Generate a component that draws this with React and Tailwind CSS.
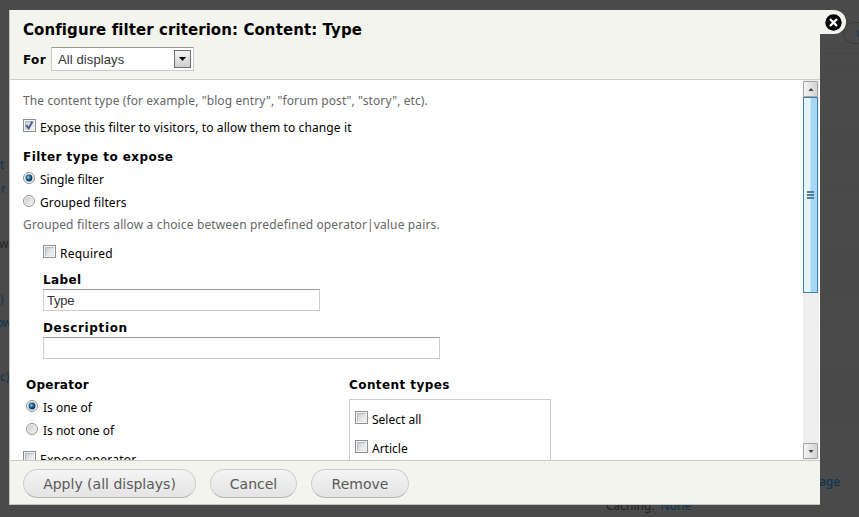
import React from "react";

const NOTO = "font-['Noto_Sans','Open_Sans',sans-serif]";

function Checkbox({ checked }) {
  return (
    <span className="flex h-[13px] w-[13px] shrink-0 border border-[#8e8f8f] bg-[#f4f4f4] p-[1px]">
      <span className="flex h-[9px] w-[9px] border border-[#b4b9c0] border-r-[#e3e5e8] border-b-[#e3e5e8] bg-gradient-to-br from-[#cbcfd5] to-[#f6f6f6]">
        {checked && (
          <svg viewBox="0 0 9 9" className="-mt-px -ml-px h-[9px] w-[9px] shrink-0" fill="none" stroke="#4a5f97" strokeWidth="2">
            <path d="M1.2 4.2 L3.6 7.4 L7.4 0.6" />
          </svg>
        )}
      </span>
    </span>
  );
}

function Radio({ checked }) {
  return (
    <svg viewBox="0 0 12 12" className="h-3 w-3 shrink-0">
      <defs>
        <linearGradient id="radioFace" x1="0" y1="0" x2="1" y2="1">
          <stop offset="0" stopColor="#c4c8cd" />
          <stop offset="1" stopColor="#fafafa" />
        </linearGradient>
        <radialGradient id="radioDot" cx="0.4" cy="0.4" r="0.6">
          <stop offset="0" stopColor="#8fd2f2" />
          <stop offset="0.5" stopColor="#1d6796" />
          <stop offset="1" stopColor="#0c2c4a" />
        </radialGradient>
      </defs>
      <circle cx="6" cy="6" r="5.5" fill="#f6f6f6" stroke="#8e8f8f" />
      <circle cx="6" cy="6" r="3.8" fill="url(#radioFace)" stroke="#d5d8db" strokeWidth="0.6" />
      {checked && <circle cx="6" cy="6" r="3.4" fill="url(#radioDot)" />}
    </svg>
  );
}

function Option({ kind, checked, label, className, text }) {
  return (
    <div className={"flex h-4 items-start " + className}>
      {kind === "radio" ? <Radio checked={checked} /> : <Checkbox checked={checked} />}
      <span className={"whitespace-nowrap " + text}>{label}</span>
    </div>
  );
}

function Heading({ children, className = "" }) {
  return (
    <h2 className={"h-4 font-['DejaVu_Sans',sans-serif] text-[12px] leading-[18px] font-bold whitespace-nowrap " + className}>{children}</h2>
  );
}

function Button({ children, className }) {
  return (
    <button className={"h-[29px] rounded-full border border-[#cfcfcf] border-b-[#b4b4b4] bg-gradient-to-b from-[#f4f4f4] to-[#e4e4e4] text-center font-['DejaVu_Sans',sans-serif] text-[14px] whitespace-nowrap text-[#5a5a5a] " + className}>
      {children}
    </button>
  );
}

function ArrowButton({ down }) {
  return (
    <span className="flex h-4 w-[15px] shrink-0 items-center justify-center rounded-[1px] border border-[#a3a3a3] bg-gradient-to-r from-[#f5f5f5] to-[#d2d2d4]">
      <svg viewBox="0 0 7 4" className="h-[3px] w-[6px]" fill="#444">
        <path d={down ? "M0 0H7L3.5 4Z" : "M0 4H7L3.5 0Z"} />
      </svg>
    </span>
  );
}

export default function App() {
  return (
    <div className={"relative h-[517px] w-[859px] overflow-hidden bg-[#4a4a4a] text-[12px] leading-4 text-black " + NOTO}>
      <div className="flex h-full justify-between text-[#0c3450]">
        <div className="flex w-[9px] flex-col whitespace-nowrap">
          <span className="mt-[157px]">t</span>
          <span className="mt-2 pl-px">r</span>
          <span className="mt-[39px] -ml-px text-[#222]">w</span>
          <span className="mt-[39px]">)</span>
          <span className="mt-2 -ml-[4px] tracking-[-0.6px]">ow</span>
          <span className="mt-[38px]">c)</span>
        </div>
        <div className="flex w-[260px] shrink-0 flex-col">
          <div className="mt-[22px] -mr-[48px] flex h-[22px] w-16 shrink-0 items-center self-end rounded-full border border-[#3a3a3a] pl-[12px]">v</div>
          <div className="mt-[9px] h-[13px] shrink-0 border-y border-[#464646]" />
          <div className="h-16 shrink-0 border-b border-[#464646]" />
          <div className="h-[30px] shrink-0 border-b border-[#464646] bg-[#494949]" />
          <div className="h-[31px] shrink-0 border-b border-[#464646]" />
          <div className="h-[54px] shrink-0" />
          <div className="h-[54px] shrink-0 bg-[#494949]" />
          <div className="h-[26px] shrink-0" />
          <div className="h-[46px] shrink-0 border-y border-[#474747]" />
          <div className="h-[49px] shrink-0 border-b border-[#474747] bg-[#494949]" />
          <div className="mt-[54px] flex shrink-0 flex-col">
            <span className="pl-[220px] font-medium">age</span>
            <span className="mt-2 pl-[7px]"><span className="mr-[6px] text-[#222]">Caching:</span>None</span>
          </div>
        </div>
      </div>

      <div className="absolute top-[10px] left-[9px] flex">
        <div className="flex h-[495px] w-[811px] flex-col border-b border-l border-[#c4c4c0] bg-white">
          <header className="flex h-[70px] shrink-0 flex-col border-b border-[#ccc] bg-[#f3f4ee] pl-[13px]">
            <h1 className="mt-[9px] h-5 font-['DejaVu_Sans',sans-serif] text-[15px] leading-[22px] font-bold tracking-[0.08px] whitespace-nowrap">Configure filter criterion: Content: Type</h1>
            <div className="mt-2 flex h-6 items-center">
              <Heading className="w-7 tracking-[0.4px]">For</Heading>
              <div className="flex h-6 w-[143px] items-center justify-between border border-[#ccc] border-t-[#999] bg-white pr-[2px] pl-[6px]">
                <span className="pt-[2px] font-['Liberation_Sans',sans-serif] text-[13px] tracking-[0.1px] text-[#333]">All displays</span>
                <span className="flex h-[18px] w-[17px] items-center justify-center border border-[#707070] bg-gradient-to-b from-[#f4f4f4] to-[#cfcfcf]">
                  <svg viewBox="0 0 7 4" className="h-1 w-[7px]"><path d="M0 0H7L3.5 4Z" /></svg>
                </span>
              </div>
            </div>
          </header>

          <div className="flex h-[380px] shrink-0 justify-between overflow-hidden">
            <div className="flex w-[700px] flex-col pl-[13px]">
              <p className="mt-[13px] h-4 tracking-[0.1px] whitespace-nowrap text-[#666]">The content type (for example, "blog entry", "forum post", "story", etc).</p>
              <Option kind="checkbox" checked label="Expose this filter to visitors, to allow them to change it" className="mt-[10px]" text="ml-1 mt-px tracking-[0.12px]" />
              <Heading className="mt-[13px] tracking-[0.45px]">Filter type to expose</Heading>
              <Option kind="radio" checked label="Single filter" className="mt-2" text="ml-[5px]" />
              <Option kind="radio" label="Grouped filters" className="mt-[7px]" text="ml-[5px] tracking-[0.12px]" />
              <p className="mt-[6px] h-4 tracking-[0.14px] whitespace-nowrap text-[#666]">Grouped filters allow a choice between predefined operator|value pairs.</p>
              <div className="flex flex-col pl-5">
                <Option kind="checkbox" label="Required" className="mt-[12px]" text="ml-1 mt-px tracking-[0.25px]" />
                <Heading className="mt-[10px] tracking-[0.4px]">Label</Heading>
                <div className="mt-[2px] flex h-[22px] w-[277px] items-center border border-[#ccc] border-t-[#999] pt-[2px] pl-[3px] font-['Liberation_Sans',sans-serif] text-[13px] tracking-[-0.2px] text-[#333]">Type</div>
                <Heading className="mt-2 tracking-[0.65px]">Description</Heading>
                <div className="mt-[2px] h-[22px] w-[397px] border border-[#ccc] border-t-[#999]" />
              </div>
              <div className="mt-[17px] flex">
                <div className="flex w-[326px] flex-col">
                  <Heading className="pl-[3px] tracking-[0.25px]">Operator</Heading>
                  <Option kind="radio" checked label="Is one of" className="mt-2 pl-[3px]" text="ml-[5px]" />
                  <Option kind="radio" label="Is not one of" className="mt-[7px] pl-[3px]" text="ml-[5px]" />
                  <Option kind="checkbox" label="Expose operator" className="mt-3" text="ml-1 mt-px tracking-[0.25px]" />
                </div>
                <div className="flex flex-col">
                  <Heading className="tracking-[0.42px]">Content types</Heading>
                  <div className="mt-[7px] flex h-[90px] w-[202px] flex-col border border-[#ccc] pl-[5px]">
                    <Option kind="checkbox" label="Select all" className="mt-[11px]" text="ml-1 mt-px" />
                    <Option kind="checkbox" label="Article" className="mt-[13px]" text="ml-1 mt-px" />
                  </div>
                </div>
              </div>
            </div>
            <div className="mr-px flex w-4 flex-col bg-[#eee] pt-px pb-px">
              <ArrowButton />
              <div className="flex h-[196px] w-[15px] flex-col items-center justify-center gap-px border border-[#3c7fb1] bg-gradient-to-r from-[#e6f5fd] from-45% to-[#a7d7f5] to-55%">
                <span className="h-[2px] w-[7px] bg-[#4d7f9e]" />
                <span className="h-[2px] w-[7px] bg-[#4d7f9e]" />
                <span className="h-[2px] w-[7px] bg-[#4d7f9e]" />
              </div>
              <div className="grow" />
              <ArrowButton down />
            </div>
          </div>

          <footer className="flex grow items-start gap-[14px] border-t border-[#ccc] bg-[#f3f4ee] pt-2 pl-[13px]">
            <Button className="w-[173px]">Apply (all displays)</Button>
            <Button className="w-[87px]">Cancel</Button>
            <Button className="w-[98px]">Remove</Button>
          </footer>
        </div>
        <div className="-ml-px flex h-6 w-[27px] items-center rounded-r-full bg-[#f3f4ee] pl-[5.5px]">
          <svg viewBox="0 0 17 17" className="h-[17px] w-[17px]">
            <circle cx="8.5" cy="8.5" r="8.2" />
            <path d="M5 5L12 12M12 5L5 12" stroke="#fff" strokeWidth="2.4" />
          </svg>
        </div>
      </div>
    </div>
  );
}
